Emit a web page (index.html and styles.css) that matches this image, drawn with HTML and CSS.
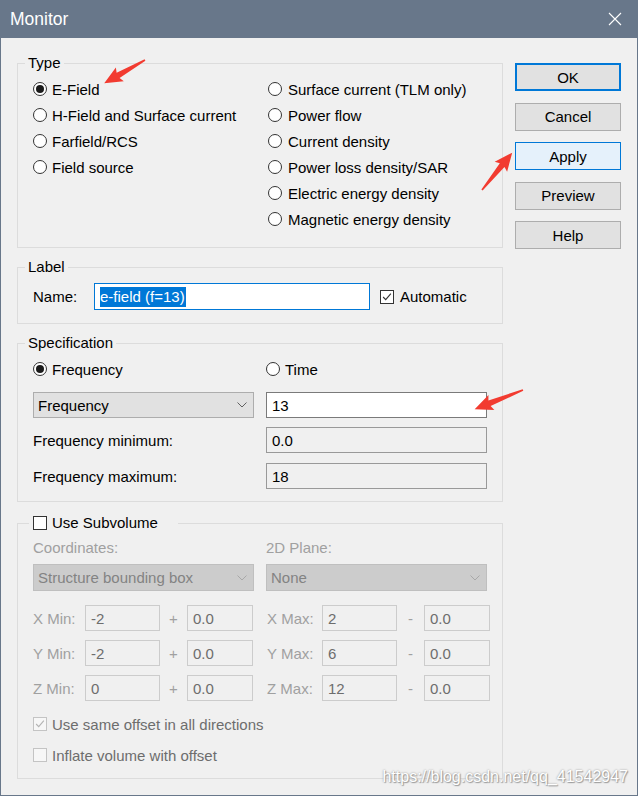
FILE: index.html
```html
<!DOCTYPE html>
<html>
<head>
<meta charset="utf-8">
<title>Monitor</title>
<link rel="stylesheet" href="styles.css">
</head>
<body>
<div class="window">
  <div class="titlebar">
    <span class="title">Monitor</span>
    <svg class="close" width="14" height="14" viewBox="0 0 14 14"><path d="M1 1 L13 13 M13 1 L1 13" stroke="#fff" stroke-width="1.1" fill="none"/></svg>
  </div>
  <div class="client">
    <div class="groups">
      <fieldset class="group type">
        <legend>Type</legend>
        <div class="two-col">
          <div class="col">
            <div class="opt"><span class="radio on"></span>E-Field</div>
            <div class="opt"><span class="radio"></span>H-Field and Surface current</div>
            <div class="opt"><span class="radio"></span>Farfield/RCS</div>
            <div class="opt"><span class="radio"></span>Field source</div>
          </div>
          <div class="col">
            <div class="opt"><span class="radio"></span>Surface current (TLM only)</div>
            <div class="opt"><span class="radio"></span>Power flow</div>
            <div class="opt"><span class="radio"></span>Current density</div>
            <div class="opt"><span class="radio"></span>Power loss density/SAR</div>
            <div class="opt"><span class="radio"></span>Electric energy density</div>
            <div class="opt"><span class="radio"></span>Magnetic energy density</div>
          </div>
        </div>
      </fieldset>

      <fieldset class="group label-group">
        <legend>Label</legend>
        <div class="name-row">
          <span class="name-lbl">Name:</span>
          <div class="textbox focused"><span class="sel">e-field (f=13)</span></div>
          <span class="check on"><svg viewBox="0 0 14 14"><polyline points="2.5,7 5.5,10 11.5,3" stroke="#333" stroke-width="1.3" fill="none"/></svg></span>
          <span class="check-text">Automatic</span>
        </div>
      </fieldset>

      <fieldset class="group spec">
        <legend>Specification</legend>
        <div class="spec-grid">
          <div class="opt"><span class="radio on"></span>Frequency</div>
          <div class="opt"><span class="radio"></span>Time</div>
          <div class="combo"><span>Frequency</span><svg width="10" height="6" viewBox="0 0 10 6"><polyline points="0.5,0.5 5,5 9.5,0.5" fill="none" stroke="#606060"/></svg></div>
          <div class="textbox white">13</div>
          <div class="field-lbl">Frequency minimum:</div>
          <div class="textbox ro">0.0</div>
          <div class="field-lbl">Frequency maximum:</div>
          <div class="textbox ro">18</div>
        </div>
      </fieldset>

      <fieldset class="group subvol">
        <legend><span class="check"></span><span>Use Subvolume</span></legend>
        <div class="sub-top">
          <div class="dis-lbl">Coordinates:</div>
          <div class="dis-lbl">2D Plane:</div>
          <div class="combo disabled"><span>Structure bounding box</span><svg width="10" height="6" viewBox="0 0 10 6"><polyline points="0.5,0.5 5,5 9.5,0.5" fill="none" stroke="#a8a8a8"/></svg></div>
          <div class="combo disabled"><span>None</span><svg width="10" height="6" viewBox="0 0 10 6"><polyline points="0.5,0.5 5,5 9.5,0.5" fill="none" stroke="#a8a8a8"/></svg></div>
        </div>
        <div class="xyz">
          <span class="dis-lbl">X Min:</span><div class="textbox dis">-2</div><span class="op">+</span><div class="textbox dis">0.0</div><span></span>
          <span class="dis-lbl">X Max:</span><div class="textbox dis">2</div><span class="op">-</span><div class="textbox dis">0.0</div>
          <span class="dis-lbl">Y Min:</span><div class="textbox dis">-2</div><span class="op">+</span><div class="textbox dis">0.0</div><span></span>
          <span class="dis-lbl">Y Max:</span><div class="textbox dis">6</div><span class="op">-</span><div class="textbox dis">0.0</div>
          <span class="dis-lbl">Z Min:</span><div class="textbox dis">0</div><span class="op">+</span><div class="textbox dis">0.0</div><span></span>
          <span class="dis-lbl">Z Max:</span><div class="textbox dis">12</div><span class="op">-</span><div class="textbox dis">0.0</div>
        </div>
        <div class="dis-opt first"><span class="check dis"><svg viewBox="0 0 14 14"><polyline points="2.5,7 5.5,10 11.5,3" stroke="#b4b4b4" stroke-width="1.3" fill="none"/></svg></span>Use same offset in all directions</div>
        <div class="dis-opt second"><span class="check dis"></span>Inflate volume with offset</div>
      </fieldset>
    </div>

    <div class="buttons">
      <div class="btn default">OK</div>
      <div class="btn">Cancel</div>
      <div class="btn hot">Apply</div>
      <div class="btn">Preview</div>
      <div class="btn">Help</div>
    </div>
  </div>

  <svg class="arrows" width="638" height="796" viewBox="0 0 638 796">
    <g fill="#f23b30">
      <polygon transform="translate(145,60) rotate(150.2)" points="0,-0.8 31,-3 29,-8 47,0 29,8 31,3 0,0.8"/>
      <polygon transform="translate(482,190) rotate(-51)" points="0,-0.8 32,-3 30,-8 48,0 30,8 32,3 0,0.8"/>
      <polygon transform="translate(523,390) rotate(158.4)" points="0,-0.8 36,-3 34,-8 52,0 34,8 36,3 0,0.8"/>
    </g>
  </svg>
  <div class="watermark">https://blog.csdn.net/qq_41542947</div>
</div>
</body>
</html>
```

FILE: styles.css
```css
* { box-sizing: border-box; }
html, body { margin: 0; padding: 0; }
body {
  width: 638px;
  height: 796px;
  overflow: hidden;
  background: #f0f0f0;
  font-family: "Liberation Sans", Arial, sans-serif;
  font-size: 15px;
  color: #000;
}
.window {
  position: relative;
  width: 638px;
  height: 796px;
  border: 1px solid #68778a;
  border-top: none;
  background: #f0f0f0;
}
.titlebar {
  height: 38px;
  background: #68778a;
  color: #fff;
  display: flex;
  align-items: center;
  justify-content: space-between;
  padding: 0 15px 0 9px;
}
.title { font-size: 17.5px; }
.close { display: block; }

.client {
  display: flex;
  gap: 12px;
  padding: 15px 15px 0 16px;
}
.groups {
  width: 486px;
  display: flex;
  flex-direction: column;
  gap: 9px;
}
.group {
  margin: 0;
  min-width: 0;
  border: 1px solid #dcdcdc;
  padding: 0 15px;
}
.group legend {
  margin-left: -8px;
  padding: 0 3px;
  height: 20px;
  line-height: 20px;
}

/* radios */
.opt {
  display: flex;
  align-items: center;
  height: 26px;
  white-space: nowrap;
}
.radio {
  width: 14px;
  height: 14px;
  border: 1px solid #333;
  border-radius: 50%;
  background: #fff;
  margin-right: 5px;
  position: relative;
  flex: none;
}
.radio.on::after {
  content: "";
  position: absolute;
  left: 2px;
  top: 2px;
  width: 8px;
  height: 8px;
  border-radius: 50%;
  background: #1a1a1a;
}

.type { padding-top: 3px; padding-bottom: 15px; }
.two-col {
  display: grid;
  grid-template-columns: 235px 219px;
}
.two-col .col:last-child .radio { margin-right: 6px; }

/* label group */
.label-group { padding-top: 6px; padding-bottom: 13px; }
.name-row { display: flex; align-items: center; height: 27px; }
.name-lbl { width: 61px; }
.textbox {
  height: 26px;
  border: 1px solid #a0a0a0;
  display: flex;
  align-items: center;
  padding-left: 5px;
  white-space: nowrap;
}
.textbox.focused {
  width: 276px;
  height: 27px;
  border-color: #0078d7;
  background: #fff;
}
.sel {
  background: #0078d7;
  color: #fff;
  line-height: 20px;
  padding: 0 1px 0 0;
}
.check {
  width: 14px;
  height: 14px;
  border: 1px solid #333;
  background: #fff;
  flex: none;
  display: inline-block;
}
.check svg { display: block; width: 12px; height: 12px; }
.name-row .check { margin-left: 10px; margin-right: 6px; }

/* spec */
.spec { padding-top: 3px; padding-bottom: 12px; }
.spec-grid {
  display: grid;
  grid-template-columns: 221px 221px;
  column-gap: 12px;
  grid-template-rows: 26px 36px 35px 36px;
  align-items: end;
}
.combo {
  height: 26px;
  border: 1px solid #adadad;
  background: #e1e1e1;
  display: flex;
  align-items: center;
  justify-content: space-between;
  padding: 0 6px 0 4px;
  white-space: nowrap;
}
.combo svg { display: block; }
.textbox.white { background: #fff; border-color: #7a7a7a; }
.textbox.ro { background: #f0f0f0; border-color: #999; }
.field-lbl { display: flex; align-items: center; height: 26px; }

/* subvolume */
.subvol { margin-top: 2px; padding-top: 4px; padding-bottom: 13px; }
.subvol legend {
  margin-left: -4px;
  padding: 0 20px 0 4px;
  display: flex;
  align-items: center;
}
.subvol legend .check { margin-right: 5px; }
.dis-lbl { color: #a0a0a0; display: flex; align-items: center; white-space: nowrap; }
.sub-top {
  display: grid;
  grid-template-columns: 221px 221px;
  column-gap: 12px;
  grid-template-rows: 20px 27px;
  row-gap: 7px;
}
.combo.disabled {
  background: #cccccc;
  border-color: #bfbfbf;
  color: #838383;
  height: 27px;
}
.xyz {
  margin-top: 14px;
  display: grid;
  grid-template-columns: 52px 75px 27px 66px 14px 55px 75px 27px 66px;
  grid-auto-rows: 26px;
  row-gap: 9px;
}
.textbox.dis {
  background: #f0f0f0;
  border-color: #cccccc;
  color: #6d6d6d;
}
.op { color: #a0a0a0; display: flex; align-items: center; justify-content: center; }
.dis-opt {
  display: flex;
  align-items: center;
  height: 20px;
  color: #6d6d6d;
  white-space: nowrap;
}
.dis-opt .check { border-color: #c4c4c4; background: #f7f7f7; margin-right: 5px; }
.dis-opt.first { margin-top: 13px; }
.dis-opt.second { margin-top: 11px; }

/* buttons */
.buttons {
  width: 106px;
  margin-top: 10px;
  display: flex;
  flex-direction: column;
  gap: 11.5px;
}
.btn {
  height: 28px;
  border: 1px solid #adadad;
  background: #e1e1e1;
  display: flex;
  align-items: center;
  justify-content: center;
}
.btn.default { border: 2px solid #0078d7; }
.btn.hot { border-color: #0078d7; background: #e5f1fb; }

.arrows {
  position: absolute;
  left: -1px;
  top: 0;
  pointer-events: none;
}
.watermark {
  position: absolute;
  right: 9px;
  bottom: 9px;
  color: #fff;
  font-size: 16px;
  text-shadow: 0 0 2px #8a8a8a, 1px 1px 1px #a0a0a0;
}
```
